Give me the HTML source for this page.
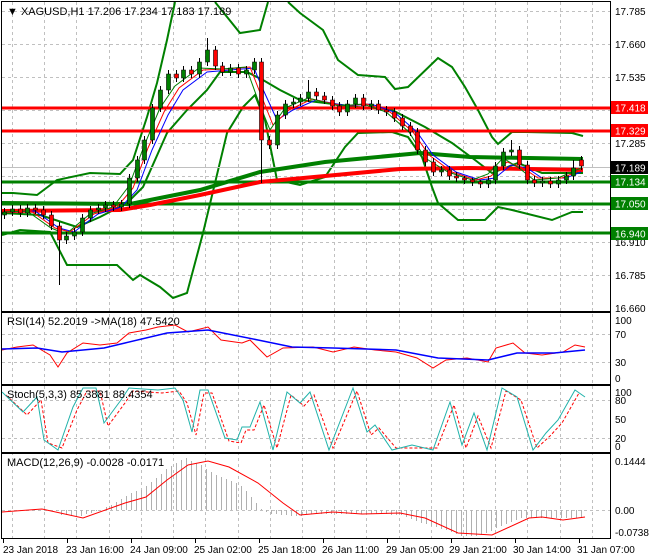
<!DOCTYPE html>
<html><head><meta charset="utf-8"><style>
html,body{margin:0;padding:0;background:#fff;width:650px;height:560px;overflow:hidden}
svg{display:block;font-family:"Liberation Sans",sans-serif;font-size:11px}
</style></head><body>
<svg width="650" height="560" xmlns="http://www.w3.org/2000/svg">
<rect width="650" height="560" fill="#fff"/>
<g stroke="#c0c0c0" stroke-dasharray="3,3" fill="none">
<path d="M12.5 2V538M44.5 2V538M76.5 2V538M109.5 2V538M141.5 2V538M173.5 2V538M205.5 2V538M238.5 2V538M270.5 2V538M302.5 2V538M334.5 2V538M366.5 2V538M399.5 2V538M431.5 2V538M463.5 2V538M495.5 2V538M527.5 2V538M560.5 2V538M592.5 2V538"/>
<path d="M2 11.5H610M2 44.5H610M2 77.5H610M2 110.5H610M2 143.5H610M2 176.5H610M2 209.5H610M2 242.5H610M2 275.5H610M2 334.5H610M2 362.5H610M2 400.5H610M2 438.5H610M2 510.5H610"/>
</g>
<rect x="2" y="311" width="609" height="2" fill="#fff"/>
<rect x="2" y="384" width="609" height="2" fill="#fff"/>
<rect x="2" y="452" width="609" height="2" fill="#fff"/>
<g fill="none" stroke="#008000" stroke-width="2">
<polyline points="2,193 13,193 37,195 57,180 90,173 120,174 133,160 147,117 157,83 167,40 175,2"/>
<polyline points="215,2 240,33 260,30 268,2"/>
<polyline points="288,2 300,13 323,30 338,60 358,75 385,77 395,89 408,87 438,58 452,67 465,87 478,110 492,137 498,144 512,132 525,132 572,133 583,136"/>
<polyline points="2,235 20,230 50,232 67,265 117,265 133,280 140,275 160,287 173,298 187,293 203,233 227,133 243,107 255,95 265,120 277,180 300,185 325,177 345,147 358,133 392,132 408,137 422,157 432,187 438,203 458,220 485,220 498,207 512,210 552,220 572,212 583,212"/>
<polyline points="2,213 40,215 77,227 100,217 127,203 143,187 167,133 187,110 207,90 220,72 247,72 263,80 280,90 300,100 325,103 358,107 392,110 425,127 452,143 475,160 492,173 518,163 542,173 583,173"/>
</g>
<g stroke-width="3">
<line x1="2" y1="108" x2="611" y2="108" stroke="#f00"/>
<line x1="2" y1="131" x2="611" y2="131" stroke="#f00"/>
<line x1="2" y1="182" x2="611" y2="182" stroke="#008000"/>
<line x1="2" y1="204" x2="611" y2="204" stroke="#008000"/>
<line x1="2" y1="233" x2="611" y2="233" stroke="#008000"/>
</g>
<line x1="2" y1="167.5" x2="611" y2="167.5" stroke="#c0c0c0"/>
<polyline points="2,203 130,204 200,190 260,172 325,162 420,153 470,157 583,159" fill="none" stroke="#008000" stroke-width="4"/>
<polyline points="2,211 120,210 150,205 200,195 260,182 325,176 400,169 470,168 583,170" fill="none" stroke="#f00" stroke-width="4"/>
<g fill="none" stroke-width="1">
<polyline stroke="#00f" points="4,212 35,211 59,228 74,232 98,214 121,207 137,190 152,150 168,115 183,90 207,72 230,70 254,68 261,85 277,120 293,110 316,100 347,106 371,104 394,112 417,132 433,155 456,172 480,180 495,178 511,165 527,168 542,178 566,178 581,172"/>
<polyline stroke="#f00" points="4,212 31,211 55,228 70,232 94,214 117,207 133,188 148,148 164,112 179,88 203,70 226,69 250,67 259,90 273,125 289,110 312,99 343,106 367,104 390,112 413,132 429,155 452,172 476,180 491,176 507,162 523,168 538,178 562,178 581,170"/>
<polyline stroke="#008000" points="4,212 27,211 51,228 66,234 90,214 113,207 129,186 144,146 160,108 175,86 199,68 222,69 246,67 258,100 270,130 285,108 308,98 339,106 363,104 386,112 409,132 425,158 448,172 472,180 488,174 503,158 519,168 534,180 558,178 581,168"/>
</g>
<path stroke="#000" fill="none" d="M4.5 208V219M12.5 205V216M20.5 205V217M27.5 204V217M35.5 204V214M43.5 206V219M51.5 211V230M59.5 222V285M66.5 232V244M74.5 228V240M82.5 214V236M90.5 206V222M98.5 204V214M105.5 201V212M113.5 201V211M121.5 200V211M129.5 174V208M137.5 156V182M144.5 136V164M152.5 104V144M160.5 86V112M168.5 70V94M176.5 70V82M183.5 66V82M191.5 66V78M199.5 58V78M207.5 38V66M215.5 46V70M222.5 62V76M230.5 64V76M238.5 64V78M246.5 66V78M254.5 58V74M261.5 58V183M269.5 136V149M277.5 111V149M285.5 100V119M293.5 98V108M300.5 94V106M308.5 80V102M316.5 88V100M324.5 92V104M332.5 96V110M339.5 102V116M347.5 100V116M355.5 94V108M363.5 94V110M371.5 100V110M378.5 100V114M386.5 106V116M394.5 108V122M402.5 114V130M410.5 122V136M417.5 128V154M425.5 146V166M433.5 158V176M441.5 166V176M449.5 166V180M456.5 172V182M464.5 176V184M472.5 178V186M480.5 180V188M488.5 176V188M495.5 162V184M503.5 148V170M511.5 140V156M519.5 146V169M527.5 161V184M534.5 176V187M542.5 177V187M550.5 177V188M558.5 176V188M566.5 172V184M573.5 160V180M581.5 156V170"/>
<path fill="#008000" stroke="#000" stroke-width=".6" d="M2.5 212h4v3h-4zM10.5 209h4v3h-4zM25.5 208h4v5h-4zM64.5 236h4v4h-4zM72.5 232h4v4h-4zM80.5 218h4v14h-4zM88.5 210h4v8h-4zM96.5 208h4v2h-4zM103.5 205h4v3h-4zM119.5 204h4v3h-4zM127.5 178h4v26h-4zM135.5 160h4v18h-4zM142.5 140h4v20h-4zM150.5 108h4v32h-4zM158.5 90h4v18h-4zM166.5 74h4v16h-4zM181.5 70h4v8h-4zM197.5 62h4v12h-4zM205.5 50h4v12h-4zM228.5 68h4v4h-4zM244.5 70h4v4h-4zM252.5 62h4v8h-4zM275.5 115h4v30h-4zM283.5 104h4v11h-4zM291.5 102h4v2h-4zM298.5 98h4v4h-4zM306.5 92h4v6h-4zM345.5 104h4v8h-4zM353.5 98h4v6h-4zM369.5 104h4v2h-4zM439.5 170h4v2h-4zM486.5 180h4v4h-4zM493.5 166h4v14h-4zM501.5 152h4v14h-4zM509.5 150h4v2h-4zM540.5 181h4v2h-4zM556.5 180h4v4h-4zM564.5 176h4v4h-4zM571.5 168h4v8h-4z"/>
<path fill="#f00" stroke="#000" stroke-width=".6" d="M18.5 209h4v4h-4zM33.5 208h4v2h-4zM41.5 210h4v5h-4zM49.5 215h4v11h-4zM57.5 226h4v14h-4zM111.5 205h4v2h-4zM174.5 74h4v4h-4zM189.5 70h4v4h-4zM213.5 50h4v16h-4zM220.5 66h4v6h-4zM236.5 68h4v6h-4zM259.5 62h4v78h-4zM267.5 140h4v5h-4zM314.5 92h4v4h-4zM322.5 96h4v4h-4zM330.5 100h4v6h-4zM337.5 106h4v6h-4zM361.5 98h4v8h-4zM376.5 104h4v6h-4zM384.5 110h4v2h-4zM392.5 112h4v6h-4zM400.5 118h4v8h-4zM408.5 126h4v6h-4zM415.5 132h4v18h-4zM423.5 150h4v12h-4zM431.5 162h4v10h-4zM447.5 170h4v6h-4zM454.5 176h4v2h-4zM462.5 178h4v2h-4zM470.5 180h4v2h-4zM478.5 182h4v2h-4zM517.5 150h4v15h-4zM525.5 165h4v15h-4zM532.5 180h4v3h-4zM548.5 181h4v3h-4zM579.5 160h4v6h-4z"/>
<polyline fill="none" stroke="#f00" points="2,350 17,347 33,345 50,355 58,367 67,353 83,343 100,345 117,343 129,333 146,330 158,327 175,325 188,332 208,327 221,340 242,343 250,340 267,357 283,348 313,347 333,352 354,347 375,350 396,352 417,358 433,368 446,360 467,358 488,362 496,348 513,343 525,353 542,355 563,352 575,345 585,347"/>
<polyline fill="none" stroke="#00f" stroke-width="1.5" points="2,349 37,348 62,352 104,348 125,343 167,333 208,330 258,340 292,347 333,348 396,350 438,358 488,360 517,353 554,353 585,350"/>
<polyline fill="none" stroke="#f00" stroke-dasharray="3,2" points="6,395 27,415 41,400 48,443 62,448 77,410 87,391 100,391 108,426 125,403 133,391 162,393 179,391 187,403 196,435 204,393 212,393 229,441 241,443 246,430 254,430 264,405 277,448 291,395 304,406 314,395 333,448 357,391 371,435 379,428 396,448 416,448 437,448 454,405 466,448 478,416 491,448 506,391 521,400 537,448 550,436 562,423 579,393"/>
<polyline fill="none" stroke="#20b2aa" points="2,392 23,412 37,397 44,440 58,450 73,407 83,388 96,388 104,423 121,400 129,388 158,390 175,388 183,400 192,432 200,390 208,390 225,438 237,440 242,427 250,427 260,402 273,450 287,392 300,403 310,392 329,450 353,388 367,432 375,425 392,450 412,445 433,450 450,402 462,445 474,413 487,450 502,388 517,397 533,450 546,433 558,420 575,390 585,397"/>
<path stroke="#b0b0b0" fill="none" d="M56.5 510V511M61.5 510V515M66.5 510V515M71.5 510V516M76.5 510V516M81.5 510V516M86.5 510V514M91.5 510V513M96.5 510V511M106.5 510V507M111.5 510V505M116.5 510V502M121.5 510V499M126.5 510V496M131.5 510V493M136.5 510V491M141.5 510V490M146.5 510V486M151.5 510V482M156.5 510V478M161.5 510V474M166.5 510V469M171.5 510V466M176.5 510V463M181.5 510V460M186.5 510V458M191.5 510V461M196.5 510V463M201.5 510V465M206.5 510V469M211.5 510V472M216.5 510V475M221.5 510V477M226.5 510V479M231.5 510V481M236.5 510V483M241.5 510V486M246.5 510V491M251.5 510V497M256.5 510V503M261.5 510V509M266.5 510V512M271.5 510V514M276.5 510V514M281.5 510V515M286.5 510V515M291.5 510V516M296.5 510V516M301.5 510V516M306.5 510V514M311.5 510V514M316.5 510V514M321.5 510V514M326.5 510V514M331.5 510V514M336.5 510V514M341.5 510V514M346.5 510V514M351.5 510V514M356.5 510V514M361.5 510V514M366.5 510V514M371.5 510V514M376.5 510V514M381.5 510V514M386.5 510V514M391.5 510V515M396.5 510V515M401.5 510V515M406.5 510V517M411.5 510V519M416.5 510V521M421.5 510V523M426.5 510V524M431.5 510V526M436.5 510V527M441.5 510V529M446.5 510V530M451.5 510V532M456.5 510V534M461.5 510V536M466.5 510V536M471.5 510V536M476.5 510V536M481.5 510V535M486.5 510V533M491.5 510V531M496.5 510V528M501.5 510V526M506.5 510V524M511.5 510V522M516.5 510V520M521.5 510V518M526.5 510V518M531.5 510V518M536.5 510V518M541.5 510V518M546.5 510V518M551.5 510V518M556.5 510V518M561.5 510V518M566.5 510V518M571.5 510V518M576.5 510V518M581.5 510V518"/>
<polyline fill="none" stroke="#f00" points="2,512 42,509 83,518 125,503 146,497 167,480 188,465 208,461 229,467 258,483 283,503 300,515 333,512 362,514 400,513 425,518 458,533 492,535 529,518 542,517 563,520 585,517"/>
<g stroke="#000" fill="none" stroke-width="1">
<rect x="1.5" y="1.5" width="609" height="310"/>
<rect x="1.5" y="312.5" width="609" height="72"/>
<rect x="1.5" y="385.5" width="609" height="67"/>
<rect x="1.5" y="453.5" width="609" height="85"/>
<path d="M3.5 538V543M67.5 538V543M131.5 538V543M195.5 538V543M259.5 538V543M323.5 538V543M387.5 538V543M451.5 538V543M515.5 538V543M579.5 538V543"/>
</g>
<text x="7" y="15" fill="#000">▼ XAGUSD,H1  17.206 17.234 17.183 17.189</text>
<text x="7" y="325" fill="#000">RSI(14) 52.2019  -&gt;MA(18) 47.5420</text>
<text x="7" y="398" fill="#000">Stoch(5,3,3) 85.3881 88.4354</text>
<text x="7" y="466" fill="#000">MACD(12,26,9) -0.0028 -0.0171</text>
<g fill="#000" font-size="10">
<text x="615" y="15">17.785</text>
<text x="615" y="48">17.660</text>
<text x="615" y="81">17.535</text>
<text x="615" y="147">17.285</text>
<text x="615" y="246">16.910</text>
<text x="615" y="279">16.785</text>
<text x="615" y="312">16.660</text>
<rect x="611" y="101" width="37" height="13" fill="#f00"/><text x="615" y="111.5" fill="#fff">17.418</text>
<rect x="611" y="124" width="37" height="13" fill="#f00"/><text x="615" y="134.5" fill="#fff">17.329</text>
<rect x="611" y="161" width="37" height="13" fill="#000"/><text x="615" y="171.5" fill="#fff">17.189</text>
<rect x="611" y="175" width="37" height="13" fill="#008000"/><text x="615" y="185.5" fill="#fff">17.134</text>
<rect x="611" y="197" width="37" height="13" fill="#008000"/><text x="615" y="207.5" fill="#fff">17.050</text>
<rect x="611" y="227" width="37" height="13" fill="#008000"/><text x="615" y="237.5" fill="#fff">16.940</text>
<text x="615" y="324">100</text><text x="615" y="338">70</text><text x="615" y="366">30</text><text x="615" y="382">0</text>
<text x="615" y="396">100</text><text x="615" y="404">80</text><text x="615" y="423">50</text><text x="615" y="442">20</text><text x="615" y="450">0</text>
<text x="615" y="465">0.1444</text><text x="615" y="514">0.00</text><text x="615" y="536">-0.0738</text>
<text x="3" y="553">23 Jan 2018</text>
<text x="66" y="553">23 Jan 16:00</text>
<text x="130" y="553">24 Jan 09:00</text>
<text x="194" y="553">25 Jan 02:00</text>
<text x="258" y="553">25 Jan 18:00</text>
<text x="322" y="553">26 Jan 11:00</text>
<text x="386" y="553">29 Jan 05:00</text>
<text x="449" y="553">29 Jan 21:00</text>
<text x="513" y="553">30 Jan 14:00</text>
<text x="577" y="553">31 Jan 07:00</text>
</g>
</svg>
</body></html>
